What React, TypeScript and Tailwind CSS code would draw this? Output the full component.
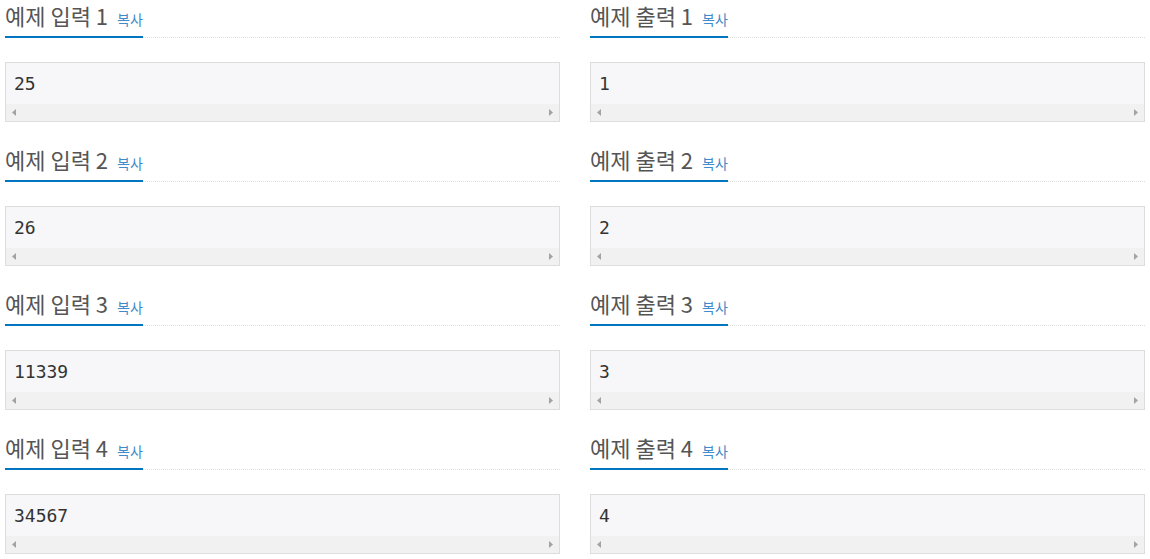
import React from 'react';

const samples = [
  { input: '25', output: '1' },
  { input: '26', output: '2' },
  { input: '11339', output: '3' },
  { input: '34567', output: '4' },
];

const Headline: React.FC<{ title: string }> = ({ title }) => (
  <div className="flex h-[38px] border-b border-dotted border-[#ddd]">
    <span className="-mb-px flex h-[38px] items-baseline border-b-2 border-[#0076c0] pt-[3px]">
      <span className="text-[22px] leading-[24px] text-[#555]">{title}</span>
      <span className="ml-[9px] cursor-pointer text-[14px] leading-[24px] text-[#428bca]">복사</span>
    </span>
  </div>
);

const ScrollBar: React.FC = () => (
  <div className="flex h-[17px] items-center justify-between bg-[#f1f1f1] px-[6px]">
    <svg width="4" height="7" viewBox="0 0 4 7">
      <path d="M4 0 L0 3.5 L4 7 Z" fill="#a3a3a3" />
    </svg>
    <svg width="4" height="7" viewBox="0 0 4 7">
      <path d="M0 0 L4 3.5 L0 7 Z" fill="#a3a3a3" />
    </svg>
  </div>
);

const SampleBox: React.FC<{ title: string; data: string }> = ({ title, data }) => (
  <section className="mb-[22px]">
    <Headline title={title} />
    <div className="mt-[24px] border border-[#ddd] bg-[#f7f7f9]">
      <pre className="flex h-[41px] items-center pl-[8px] text-[18px] text-[#333] [font-family:'DejaVu_Sans_Mono',monospace]">
        {data}
      </pre>
      <ScrollBar />
    </div>
  </section>
);

export default function App() {
  return (
    <div className="grid grid-cols-2 gap-x-[30px] bg-white px-[5px] [font-family:'Noto_Sans_CJK_KR','Noto_Sans',sans-serif]">
      {samples.map((s, i) => (
        <React.Fragment key={i}>
          <SampleBox title={`예제 입력 ${i + 1}`} data={s.input} />
          <SampleBox title={`예제 출력 ${i + 1}`} data={s.output} />
        </React.Fragment>
      ))}
    </div>
  );
}
